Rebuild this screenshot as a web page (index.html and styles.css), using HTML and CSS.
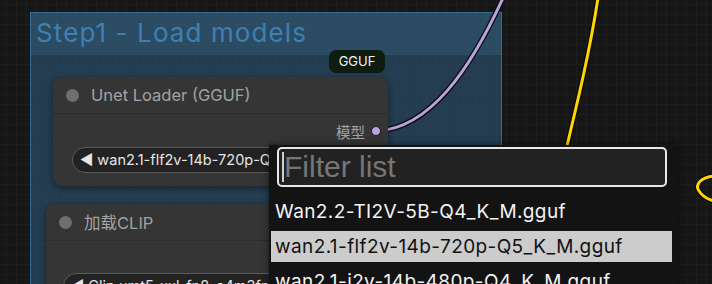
FILE: index.html
```html
<!DOCTYPE html>
<html>
<head>
    <meta charset="UTF-8">
    <title>Step1 - Load models</title>
    <link rel="stylesheet" href="styles.css">
</head>
<body>
    <div class="canvas">
        <div class="group">
            <div class="group-title">Step1 - Load models</div>
            <div class="group-body"></div>
        </div>

        <svg class="wires" width="712" height="284" viewBox="0 0 712 284">
            <path class="wire-shadow" d="M377 131 C 430 128, 470 70, 503 -2"/>
            <path class="wire wire-model" d="M377 131 C 430 128, 470 70, 503 -2"/>
            <path class="wire-shadow" d="M598 -2 C 590 50, 578 100, 566 150"/>
            <path class="wire wire-clip" d="M598 -2 C 590 50, 578 100, 566 150"/>
            <path class="wire-shadow" d="M714 176 C 702 177, 694 184, 699 191 C 703 197, 710 200, 714 201"/>
            <path class="wire wire-clip" d="M714 176 C 702 177, 694 184, 699 191 C 703 197, 710 200, 714 201"/>
        </svg>

        <div class="badge">GGUF</div>

        <div class="node node-unet">
            <div class="node-title">
                <span class="node-dot"></span>
                <span>Unet Loader (GGUF)</span>
            </div>
            <div class="node-body">
                <div class="output">
                    <span>模型</span>
                    <span class="slot"></span>
                </div>
                <div class="widget">◀ wan2.1-flf2v-14b-720p-Q5_K_M.gguf</div>
            </div>
        </div>

        <div class="node node-clip">
            <div class="node-title">
                <span class="node-dot"></span>
                <span>加载CLIP</span>
            </div>
            <div class="node-body">
                <div class="widget widget-low">◀ Clip umt5-xxl-fp8-e4m3fn-scaled</div>
            </div>
        </div>

        <div class="menu">
            <div class="filter">
                <span class="caret"></span>
                <span class="placeholder">Filter list</span>
            </div>
            <div class="item">Wan2.2-TI2V-5B-Q4_K_M.gguf</div>
            <div class="item selected">wan2.1-flf2v-14b-720p-Q5_K_M.gguf</div>
            <div class="item">wan2.1-i2v-14b-480p-Q4_K_M.gguf</div>
        </div>
    </div>
</body>
</html>
```

FILE: styles.css
```css
* {
    box-sizing: border-box;
    margin: 0;
    padding: 0;
}
body {
    width: 712px;
    height: 284px;
    overflow: hidden;
    background-color: #161616;
    font-family: Inter, "Noto Sans", "Noto Sans CJK SC", sans-serif;
}
.canvas {
    position: relative;
    width: 712px;
    height: 284px;
    overflow: hidden;
    background-image:
        linear-gradient(#1d1d1d 1px, transparent 1px),
        linear-gradient(90deg, #1d1d1d 1px, transparent 1px);
    background-size: 10px 10px;
    background-position: 6px 4px;
}

/* group */
.group {
    position: absolute;
    left: 30px;
    top: 12px;
    width: 472px;
    height: 290px;
    border: 1.5px solid #3a6b91;
    display: flex;
    flex-direction: column;
}
.group-title {
    height: 42px;
    padding: 3px 0 0 5px;
    background: rgba(51, 95, 128, 0.72);
    color: #3f80b2;
    font-size: 26px;
    letter-spacing: 1.1px;
    line-height: 34px;
}
.group-body {
    flex: 1;
    background: rgba(45, 84, 114, 0.62);
}

/* wires */
.wires {
    position: absolute;
    left: 0;
    top: 0;
}
.wire {
    fill: none;
    stroke-width: 3;
}
.wire-shadow {
    fill: none;
    stroke: #0c0c0c;
    stroke-width: 5.5;
}
.wire-model {
    stroke: #b9a3de;
}
.wire-clip {
    stroke: #ffd500;
}

/* badge */
.badge {
    position: absolute;
    left: 329px;
    top: 50px;
    width: 56px;
    height: 23px;
    border-radius: 7px;
    background: #0f1c10;
    color: #f2f2f2;
    font-size: 13px;
    line-height: 23px;
    text-align: center;
}

/* nodes */
.node {
    position: absolute;
    background: #353535;
    border-radius: 9px;
    box-shadow: 0 2px 6px rgba(0, 0, 0, 0.45);
}
.node-unet {
    left: 53px;
    top: 77px;
    width: 335px;
    height: 109px;
}
.node-clip {
    left: 46px;
    top: 204px;
    width: 335px;
    height: 110px;
}
.node-title {
    display: flex;
    align-items: center;
    gap: 12px;
    height: 37px;
    padding-left: 13px;
    color: #a3a3a3;
    font-size: 16.5px;
    border-bottom: 1px solid #2b2b2b;
}
.node-dot {
    width: 13px;
    height: 13px;
    border-radius: 50%;
    background: #6f6f6f;
}
.node-body {
    display: flex;
    flex-direction: column;
    padding: 9px 0 0 19px;
}
.output {
    display: flex;
    align-items: center;
    justify-content: flex-end;
    gap: 6px;
    padding-right: 7px;
    color: #a3a3a3;
    font-size: 14.5px;
    height: 16px;
}
.slot {
    width: 10px;
    height: 10px;
    border-radius: 50%;
    background: #b9a3de;
    border: 1px solid #1a1a1a;
}
.widget {
    margin-top: 8px;
    width: 330px;
    height: 26px;
    border: 1.5px solid #5a5a5a;
    border-radius: 13px;
    background: #222;
    color: #e6e6e6;
    font-size: 14.5px;
    line-height: 23px;
    padding-left: 7px;
    white-space: nowrap;
    overflow: hidden;
}
.widget-low {
    margin-top: 23px;
    margin-left: -2px;
}

/* dropdown menu */
.menu {
    position: absolute;
    left: 269px;
    top: 145px;
    width: 408px;
    height: 150px;
    background: #131313;
    box-shadow: 0 0 6px rgba(0, 0, 0, 0.6);
    padding: 2px 0 0 2px;
}
.filter {
    display: flex;
    align-items: center;
    width: 390px;
    height: 40px;
    margin-left: 6px;
    margin-bottom: 9px;
    border: 2px solid #e8e8e8;
    border-radius: 5px;
    background: #222;
}
.caret {
    width: 2px;
    height: 30px;
    margin-left: 3px;
    background: #cfcfcf;
}
.placeholder {
    margin-left: 0;
    color: #767676;
    font-size: 30px;
    font-family: "Liberation Sans", sans-serif;
}
.item {
    height: 31px;
    padding-left: 4px;
    width: 401px;
    color: #f4f4f4;
    font-size: 19px;
    letter-spacing: 0.4px;
    line-height: 31px;
    white-space: nowrap;
}
.item + .item {
    margin-top: 4px;
}
.item.selected {
    background: #cccccc;
    color: #111;
}
```
